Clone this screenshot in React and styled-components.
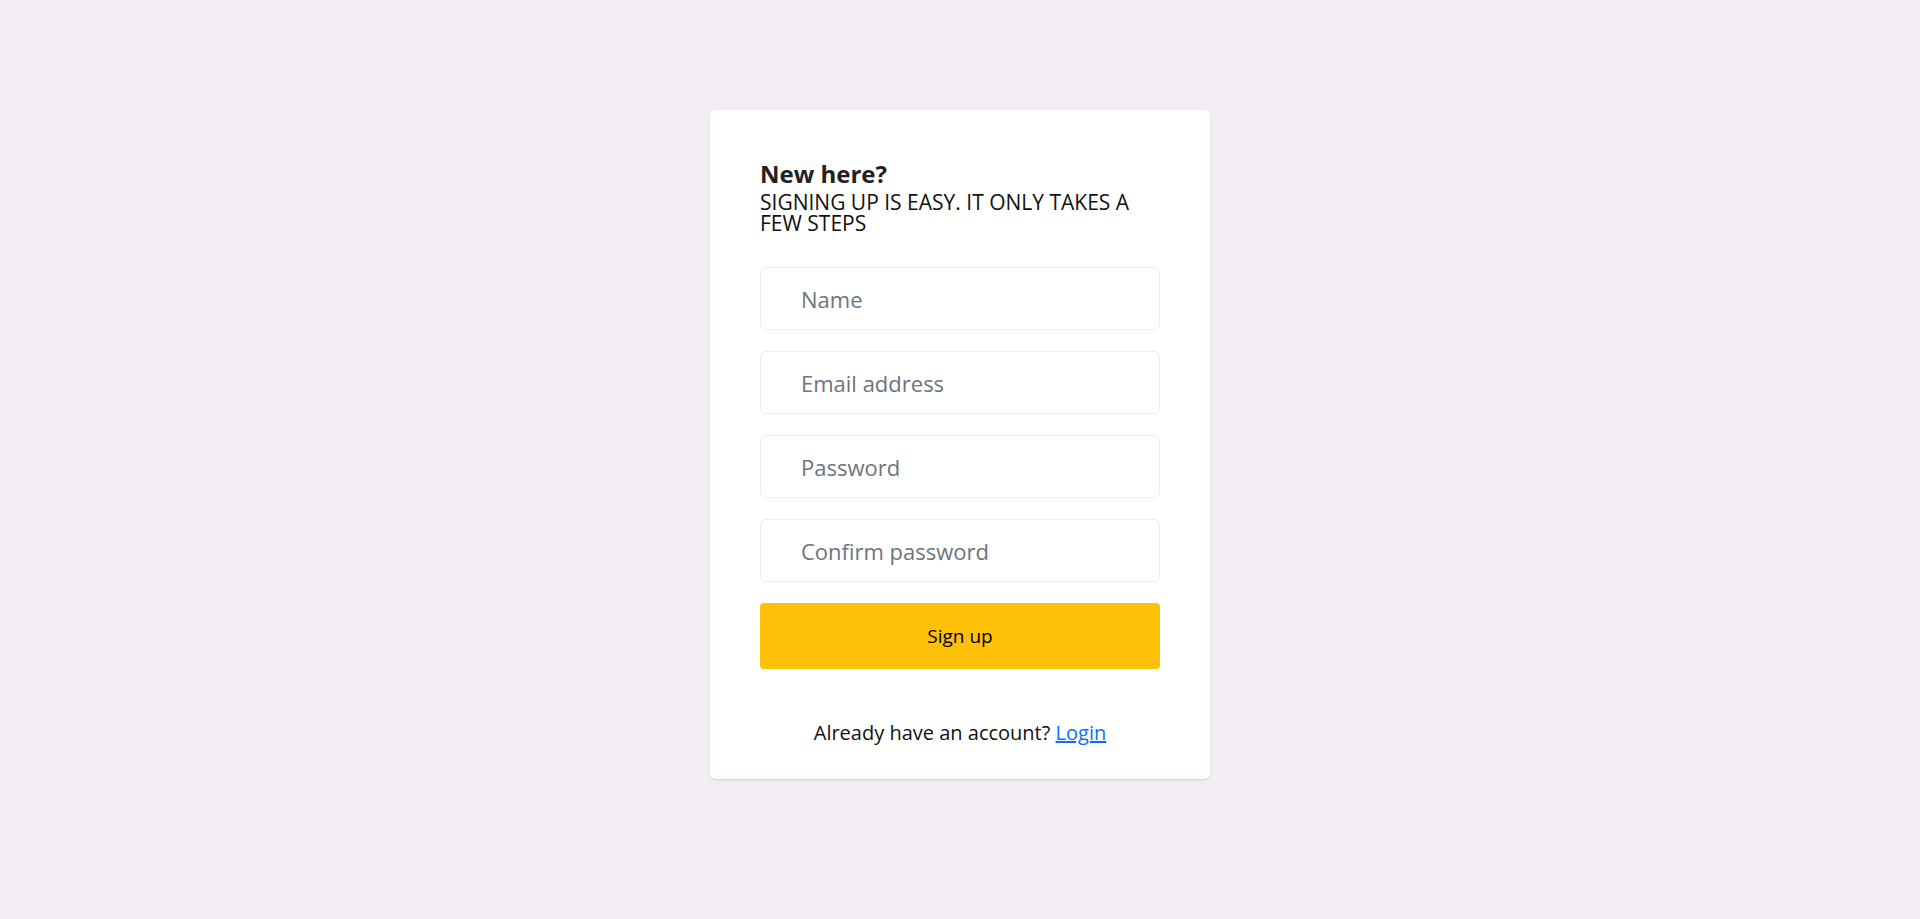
import React from "react";
import styled, { createGlobalStyle } from "styled-components";

const GlobalStyle = createGlobalStyle`
	* {
		box-sizing: border-box;
	}
	body {
		margin: 0;
		background: #f2edf3;
		font-family: "Open Sans", "Liberation Sans", sans-serif;
	}
`;

const Page = styled.div`
	min-height: 919px;
	display: flex;
	justify-content: center;
	align-items: flex-start;
	padding-top: 110px;
`;

const Card = styled.div`
	width: 500px;
	background: #fff;
	border-radius: 6px;
	box-shadow: 0 1px 2px rgba(0, 0, 0, 0.14);
	padding: 50px 50px 33px;
`;

const Title = styled.h4`
	margin: 0;
	font-size: 24px;
	line-height: 28px;
	font-weight: 700;
	color: #212121;
`;

const Subtitle = styled.h6`
	margin: 4px 0 0;
	font-size: 21px;
	line-height: 21px;
	font-weight: 400;
	color: #111;
	text-transform: uppercase;
`;

const Form = styled.form`
	display: flex;
	flex-direction: column;
	gap: 21px;
	margin-top: 33px;
`;

const Input = styled.input`
	height: 63px;
	width: 100%;
	border: 1px solid #ebedf2;
	border-radius: 6px;
	padding: 0 40px;
	font-family: inherit;
	font-size: 22px;
	color: #222;
	outline: none;
	&::placeholder {
		color: #6c757d;
	}
`;

const Button = styled.button`
	height: 66px;
	width: 100%;
	border: none;
	border-radius: 4px;
	background: #ffc107;
	color: #000;
	font-family: inherit;
	font-size: 19px;
	cursor: pointer;
`;

const Footer = styled.div`
	margin-top: 51px;
	text-align: center;
	font-size: 20px;
	line-height: 26px;
	color: #111;
	a {
		color: #0d6efd;
		text-decoration: underline;
	}
`;

const App = () => {
	return (
		<>
			<GlobalStyle />
			<Page>
				<Card>
					<Title>New here?</Title>
					<Subtitle>Signing up is easy. It only takes a few steps</Subtitle>
					<Form onSubmit={(e) => e.preventDefault()}>
						<Input type="text" placeholder="Name" />
						<Input type="email" placeholder="Email address" />
						<Input type="password" placeholder="Password" />
						<Input type="password" placeholder="Confirm password" />
						<Button type="submit">Sign up</Button>
					</Form>
					<Footer>
						Already have an account? <a href="#login">Login</a>
					</Footer>
				</Card>
			</Page>
		</>
	);
};

export default App;
